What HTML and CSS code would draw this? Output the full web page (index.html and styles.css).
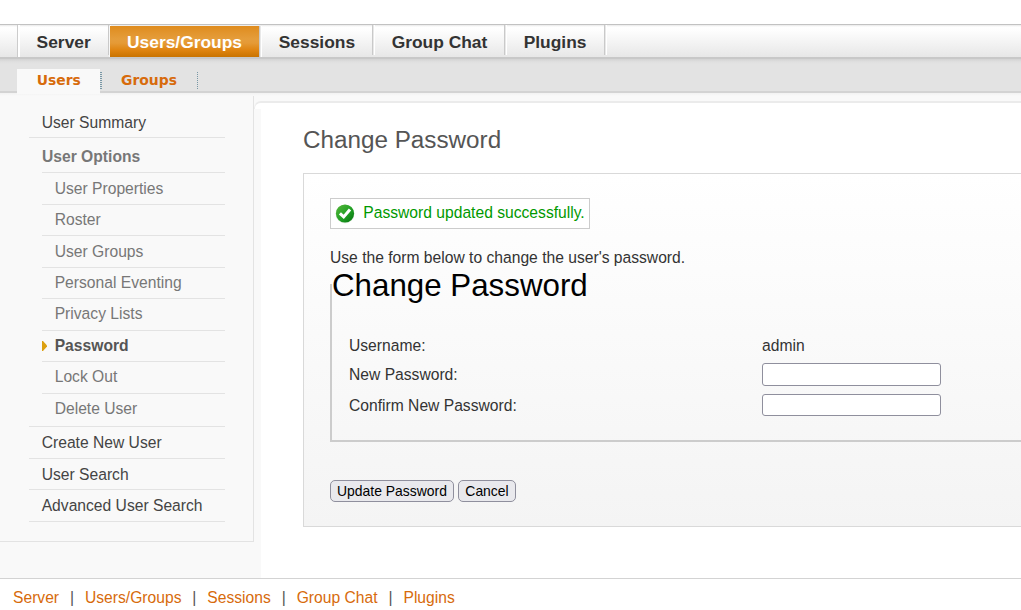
FILE: index.html
```
<!DOCTYPE html>
<html lang="en">
<head>
<meta charset="utf-8">
<title>Change Password</title>
<link rel="stylesheet" href="styles.css">
</head>
<body>
<nav class="tabs">
  <span class="lead"></span>
  <a class="tab server">Server</a>
  <a class="tab groups active">Users/Groups</a>
  <a class="tab sessions">Sessions</a>
  <a class="tab chat">Group Chat</a>
  <a class="tab plugins">Plugins</a>
</nav>
<nav class="subtabs">
  <a class="sub current">Users</a>
  <a class="sub other">Groups</a>
</nav>
<div class="page">
  <aside class="sidebar">
    <ul class="menu">
      <li class="item first">User Summary</li>
      <li class="item head">User Options</li>
      <li class="item child h32">User Properties</li>
      <li class="item child h31">Roster</li>
      <li class="item child h32">User Groups</li>
      <li class="item child h31">Personal Eventing</li>
      <li class="item child h32 raised">Privacy Lists</li>
      <li class="item child h31 selected">Password</li>
      <li class="item child h32 raised">Lock Out</li>
      <li class="item child last">Delete User</li>
      <li class="item h32">Create New User</li>
      <li class="item h31 lowered">User Search</li>
      <li class="item h32">Advanced User Search</li>
    </ul>
  </aside>
  <div class="gutter"></div>
  <div class="right">
    <div class="cap"></div>
    <main class="content">
      <h1 class="title">Change Password</h1>
      <section class="panel">
        <div class="success">
          <svg class="check" width="20" height="20" viewBox="0 0 20 20">
            <defs>
              <linearGradient id="green" x1="0" y1="0" x2="1" y2="1">
                <stop offset="0" stop-color="#58b83b"/>
                <stop offset="0.55" stop-color="#22a025"/>
                <stop offset="1" stop-color="#03700c"/>
              </linearGradient>
            </defs>
            <circle cx="10" cy="10" r="9.3" fill="#c8dcc8" opacity=".65"/>
            <circle cx="10" cy="9.5" r="9.1" fill="url(#green)"/>
            <path d="M4.9 9.4 L8.7 12.9 L15 5.6" fill="none" stroke="#fff" stroke-width="3.1"/>
          </svg>
          <span>Password updated successfully.</span>
        </div>
        <p class="intro">Use the form below to change the user's password.</p>
        <div class="fieldset">
          <h2 class="legend">Change Password</h2>
          <div class="fields">
            <span class="label">Username:</span><span>admin</span>
            <label class="label" for="pw">New Password:</label><input class="input tall" id="pw" type="password">
            <label class="label lower" for="confirm">Confirm New Password:</label><input class="input" id="confirm" type="password">
          </div>
        </div>
        <div class="actions">
          <button class="button update">Update Password</button>
          <button class="button cancel">Cancel</button>
        </div>
      </section>
    </main>
  </div>
</div>
<footer class="footer">
  <a>Server</a><span class="bar">|</span><a>Users/Groups</a><span class="bar">|</span><a>Sessions</a><span class="bar">|</span><a>Group Chat</a><span class="bar">|</span><a>Plugins</a>
</footer>
</body>
</html>
```
FILE: styles.css
```
* { box-sizing: border-box; }
html, body { margin: 0; height: 100%; overflow: hidden; }
body {
  background: #fff;
  color: #333;
  font: 15.65px/18px "Liberation Sans", Arial, sans-serif;
  padding-top: 24px;
}
.tabs {
  display: flex;
  height: 35px;
  border-top: 1px solid #c2c2c2;
  border-bottom: 2px solid #c8c8c8;
  background: linear-gradient(#e9e9e9 0, #fff 2px, #fdfdfd 6px, #e7e7e7 100%);
}
.lead {
  width: 20px;
  border-right: 2px solid #fff;
  box-shadow: inset -1px 0 #ccc;
}
.tab {
  height: 30px;
  border-right: 1px solid #c9c9c9;
  box-shadow: 1px 0 #e8e8e8, 2px 0 #fff;
  color: #333;
  font-size: 17.4px;
  font-weight: bold;
  line-height: 34px;
}
.server { width: 89px; padding-left: 16.6px; }
.groups { width: 151px; padding-left: 18px; }
.sessions { width: 113px; padding-left: 18.7px; }
.chat { width: 132px; padding-left: 18.7px; }
.plugins { width: 100px; padding-left: 18.7px; }
.active {
  height: 31px;
  margin-top: 1px;
  line-height: 32px;
  border-left: 1px solid #f6f6f6;
  padding-left: 17px;
  color: #fff;
  background: linear-gradient(#df8c1e 0, #e59d3b 42%, #e59a36 55%, #df8410 78%, #c97300 100%);
}
.subtabs {
  display: flex;
  height: 34px;
  padding: 10px 0 0 17px;
  border-bottom: 2px solid #d3d3d3;
  background: linear-gradient(#d3d3d3 0, #e0e0e0 3px, #e3e3e3 5px);
}
.sub {
  color: #d76b0c;
  font: bold 13.9px/21px "DejaVu Sans", Verdana, sans-serif;
}
.current { width: 83px; height: 25px; padding: 1px 0 0 19.7px; background: #f9f9f9; }
.other {
  width: 98px;
  height: 18px;
  margin-top: 3px;
  padding-left: 21px;
  line-height: 16px;
  background:
    repeating-linear-gradient(#7897a5 0 1px, transparent 1px 2px) 0 0 / 2px 100% no-repeat,
    repeating-linear-gradient(#7897a5 0 1px, transparent 1px 2px) 100% 0 / 1px 100% no-repeat;
}
.page {
  display: flex;
  height: 485px;
  background: linear-gradient(#f2f2f2 0, #f9f9f9 3px);
}
.sidebar {
  width: 254px;
  height: 446px;
  margin-top: 3px;
  border-right: 1px solid #e3e3e3;
  border-bottom: 1px solid #e3e3e3;
}
.menu { list-style: none; margin: 0; padding: 12px 28px 0 29px; }
.item {
  display: flex;
  align-items: center;
  padding: 0 0 0 12.7px;
  border-bottom: 1px solid #e3e3e3;
  color: #444;
}
.first { height: 30px; }
.head { height: 35px; margin-left: 13px; padding: 3px 0 0; font-weight: bold; color: #777; }
.child { margin-left: 13px; color: #777; }
.h31 { height: 31px; }
.h32 { height: 32px; }
.raised { padding-bottom: 2px; }
.lowered { padding-top: 1px; }
.last { height: 33px; margin-left: 0; padding-left: 25.7px; padding-bottom: 2px; }
.selected { position: relative; color: #555; font-weight: bold; }
.selected::before {
  content: "";
  position: absolute;
  left: 0;
  top: 10px;
  width: 5px;
  height: 10px;
  background: #dca010;
  clip-path: polygon(0 0, 20% 0, 100% 45%, 100% 55%, 20% 100%, 0 100%);
}
.gutter { width: 7px; height: 485px; }
.right { width: 760px; margin-top: 8px; }
.cap {
  height: 8px;
  margin-left: -7px;
  border-top: 2px solid #ebebeb;
  border-left: 1px solid #eee;
  border-top-left-radius: 7px;
  background: #fff;
}
.content { height: 469px; padding-left: 42px; background: #fff; }
.title { margin: 0; padding-top: 15px; height: 64px; font-size: 24.25px; font-weight: normal; line-height: 32px; color: #555; }
.panel {
  height: 354px;
  padding: 24px 0 0 26px;
  border: 1px solid #d9d9d9;
  border-right: 0;
  background: linear-gradient(#fff, #f4f4f4);
}
.success {
  display: flex;
  width: 260px;
  height: 31px;
  padding: 5px 0 0 4px;
  border: 1px solid #ccc;
  background: #fff;
  color: #090;
  white-space: nowrap;
}
.check { margin-right: 8.3px; }
.intro { margin: 20px 0 0; height: 18px; }
.fieldset {
  height: 175px;
  background: linear-gradient(#ccc, #ccc) 0 100% / 2px 156px no-repeat;
  border-bottom: 2px solid #ccc;
}
.legend { margin: 0 0 0 2px; padding-top: 1px; height: 36px; font-size: 31.3px; font-weight: normal; line-height: 36px; color: #000; }
.fields {
  display: grid;
  grid-template-columns: 413px 180px;
  grid-template-rows: 27px 31px 30px;
  align-items: center;
  padding: 29px 0 0 19px;
}
.lower { padding-top: 2px; }
.input { width: 179px; height: 22px; margin: 0; border: 1px solid #8f8f9d; border-radius: 3px; background: #fff; }
.tall { height: 23px; }
.actions { display: flex; gap: 4px; padding-top: 38px; }
.button {
  height: 22px;
  padding: 0;
  border: 1px solid #8f8f9d;
  border-radius: 5px;
  background: #e9e9ed;
  color: #000;
  font: 13.93px/18px "Liberation Sans", Arial, sans-serif;
}
.update { width: 124px; }
.cancel { width: 58px; }
.footer {
  height: 32px;
  padding: 10px 0 0 13px;
  border-top: 1px solid #d3d3d3;
  background: #fff;
  color: #d76b0c;
  white-space: nowrap;
}
.bar { display: inline-block; width: 25.9px; text-align: center; color: #555; }
```
